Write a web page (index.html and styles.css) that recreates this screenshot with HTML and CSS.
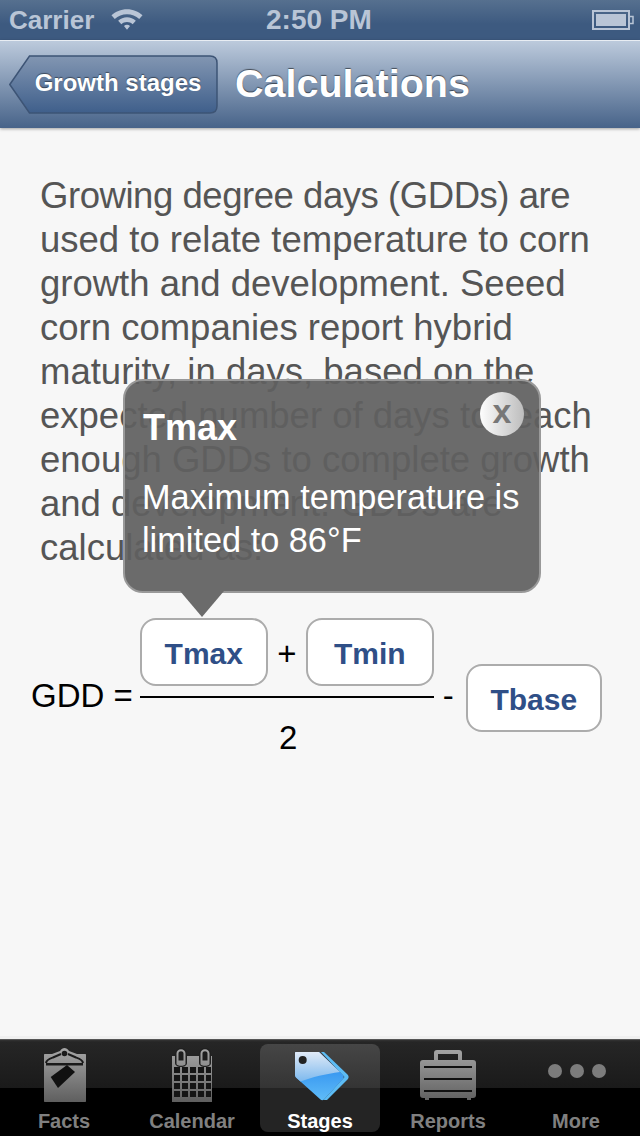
FILE: index.html
```html
<!DOCTYPE html>
<html lang="en">
<head>
<meta charset="utf-8">
<title>Calculations</title>
<link rel="stylesheet" href="styles.css">
</head>
<body>
<div class="app">
  <header class="status">
    <div class="status-left">
      <span>Carrier</span>
      <svg class="wifi" width="32" height="23" viewBox="1 5 34 24"><path d="M18 6C11.500 6 5.800 8.500 1.500 12.500L5 16.500C8.500 13.300 13 11.400 18 11.400S27.500 13.300 31 16.500L34.500 12.500C30.200 8.500 24.500 6 18 6Z M18 14.500C14.500 14.500 11.200 15.800 8.600 18.200L12 22C13.600 20.500 15.700 19.700 18 19.700S22.400 20.500 24 22L27.400 18.200C24.800 15.800 21.500 14.500 18 14.500Z M18 22.500C16.800 22.500 15.700 23 14.800 23.800L18 28L21.200 23.800C20.300 23 19.200 22.500 18 22.500Z"/></svg>
    </div>
    <div class="status-time">2:50 PM</div>
    <svg class="battery" width="42" height="20" viewBox="0 0 42 20"><rect x="1" y="1" width="36" height="18" fill="none" stroke="#b9c5d6" stroke-width="2"/><rect x="4" y="4" width="30" height="12" fill="#b9c5d6"/><path d="M38 6.500h3v7h-3" fill="none" stroke="#b9c5d6" stroke-width="1.500"/></svg>
  </header>
  <nav class="navbar">
    <div class="back">
      <svg class="back-shape" width="210" height="60" viewBox="0 0 210 60">
        <defs><linearGradient id="backg" x1="0" y1="0" x2="0" y2="1"><stop offset="0" stop-color="#8296b2"/><stop offset="1" stop-color="#3f5f8b"/></linearGradient></defs>
        <path d="M0.800 29.500L20.500 1H201C205.500 1 208 3.500 208 8V51C208 55.500 205.500 58 201 58H20.500Z" fill="url(#backg)" stroke="#3d5475" stroke-width="1.500"/>
      </svg>
      <span class="back-label">Growth stages</span>
    </div>
    <h1 class="title">Calculations</h1>
  </nav>
  <main class="content">
    <p class="intro"><span class="intro-first">Growing degree days (GDDs) are</span> used to relate temperature to corn growth and development. Seeed corn companies report hybrid maturity, in days, based on the expected number of days to reach enough GDDs to complete growth and development. GDDs are calculated as:</p>
    <div class="formula">
      <span class="sym gdd">GDD =</span>
      <div class="fraction">
        <div class="numerator">
          <span class="term">Tmax</span>
          <span class="sym">+</span>
          <span class="term">Tmin</span>
        </div>
        <div class="rule"></div>
        <div class="sym denominator">2</div>
      </div>
      <span class="sym minus">-</span>
      <span class="term tbase">Tbase</span>
    </div>
    <aside class="popup">
      <div class="popup-title">Tmax</div>
      <div class="popup-text">Maximum temperature is limited to 86°F</div>
      <div class="close">x</div>
      <div class="popup-arrow"></div>
    </aside>
  </main>
  <footer class="tabbar">
    <div class="tab">
      <svg class="icon" width="60" height="60" viewBox="0 0 60 60"><defs><linearGradient id="ig" gradientUnits="userSpaceOnUse" x1="0" y1="0" x2="0" y2="56"><stop offset="0" stop-color="#a6a6a6"/><stop offset="1" stop-color="#5c5c5c"/></linearGradient></defs>
        <path fill="url(#ig)" d="M11 6H18L26 3C27 1 29 0 30.500 0S34 1 35 3L43 6H51C51.700 6 52 6.300 52 7V53C52 53.700 51.700 54 51 54H11C10.300 54 10 53.700 10 53V7C10 6.300 10.300 6 11 6Z"/>
        <path fill="none" stroke="#1a1a1a" stroke-width="2" d="M12 15C12.500 11.500 16 10.500 19 9.500L27 6 M49 15C48.500 11.500 45 10.500 42 9.500L34 6"/>
        <rect x="12" y="15" width="37" height="2.500" fill="#1a1a1a"/>
        <circle cx="30.500" cy="5.500" r="2.800" fill="#1a1a1a"/>
        <path fill="#111" d="M16.700 29L33 17L41 24L24 40Z"/>
      </svg>
      <span class="tab-label">Facts</span>
    </div>
    <div class="tab">
      <svg class="icon" width="60" height="60" viewBox="0 0 60 60">
        <rect x="10" y="8" width="40" height="46" fill="url(#ig)"/>
        <path d="M13 5.500C13 2.500 15.500 0 19 0S25 2.500 25 5.500V15C25 17.500 22 19 19 19S13 17.500 13 15Z M37 5.500C37 2.500 39.500 0 43 0S49 2.500 49 5.500V15C49 17.500 46 19 43 19S37 17.500 37 15Z" fill="#202020"/>
        <path d="M14.500 5.500C14.500 3 16.500 1.200 19 1.200S23.500 3 23.500 5.500V16C23.500 17 21 17.800 19 17.800S14.500 17 14.500 16Z M38.500 5.500C38.500 3 40.500 1.200 43 1.200S47.500 3 47.500 5.500V16C47.500 17 45 17.800 43 17.800S38.500 17 38.500 16Z" fill="url(#ig)"/>
        <path d="M16.500 5.500C16.500 4 17.700 3.200 19 3.200S21.500 4 21.500 5.500V12.500H16.500Z M40.500 5.500C40.500 4 41.700 3.200 43 3.200S45.500 4 45.500 5.500V12.500H40.500Z" fill="#1d1d1d"/>
        <g fill="#151515">
          <rect x="12" y="19" width="6" height="6"/><rect x="20" y="19" width="6" height="6"/><rect x="28" y="19" width="6" height="6"/><rect x="36" y="19" width="6" height="6"/><rect x="44" y="19" width="5" height="6"/>
          <rect x="12" y="27" width="6" height="6"/><rect x="20" y="27" width="6" height="6"/><rect x="28" y="27" width="6" height="6"/><rect x="36" y="27" width="6" height="6"/><rect x="44" y="27" width="5" height="6"/>
          <rect x="12" y="35" width="6" height="6"/><rect x="20" y="35" width="6" height="6"/><rect x="28" y="35" width="6" height="6"/><rect x="36" y="35" width="6" height="6"/><rect x="44" y="35" width="5" height="6"/>
          <rect x="12" y="43" width="6" height="6"/><rect x="20" y="43" width="6" height="6"/><rect x="28" y="43" width="6" height="6"/><rect x="36" y="43" width="6" height="6"/><rect x="44" y="43" width="5" height="6"/>
        </g>
      </svg>
      <span class="tab-label">Calendar</span>
    </div>
    <div class="tab active">
      <svg class="icon" width="60" height="60" viewBox="0 0 60 60"><defs><linearGradient id="glossg" x1="0" y1="0" x2="0" y2="1"><stop offset="0" stop-color="#e0eaf7"/><stop offset="1" stop-color="#7db9ee"/></linearGradient><linearGradient id="tagg" x1="0" y1="0" x2="0" y2="1"><stop offset="0" stop-color="#1f80ec"/><stop offset="1" stop-color="#5fbcf8"/></linearGradient></defs>
        <path d="M31 4H34L57.500 26.500C59 28 59 30 57.500 31.500L37 52H33.500L54.500 29Z" fill="#5cbcf5"/>
        <path d="M6 4H29L53 27C54 28 54 30 53 31L34 51.500C33 52.500 31.500 52.500 30.500 51.500L6 29.500C5.300 28.800 5 28 5 27V5C5 4.400 5.400 4 6 4Z" fill="url(#tagg)"/>
        <path d="M6 4H29L50 24C36 26 22 29 10.500 33.500L6 29.500C5.300 28.800 5 28 5 27V5C5 4.400 5.400 4 6 4Z" fill="url(#glossg)"/>
        <circle cx="12.700" cy="12" r="4" fill="#222"/>
      </svg>
      <span class="tab-label">Stages</span>
    </div>
    <div class="tab">
      <svg class="icon" width="60" height="60" viewBox="0 0 60 60">
        <path d="M16 12V5C16 3 17 2 19 2H41C43 2 44 3 44 5V12H40V6H20V12Z" fill="url(#ig)"/>
        <path fill="url(#ig)" d="M5 12H55C57 12 58 13 58 15V47C58 49 57 50 55 50H53V52H49V50H11V52H7V50H5C3 50 2 49 2 47V15C2 13 3 12 5 12Z"/>
        <rect x="6" y="18" width="48" height="2" fill="#111"/><rect x="6" y="30" width="48" height="2" fill="#111"/><rect x="6" y="42" width="48" height="2" fill="#111"/>
      </svg>
      <span class="tab-label">Reports</span>
    </div>
    <div class="tab">
      <svg class="icon" width="60" height="60" viewBox="0 0 60 60">
        <circle cx="9" cy="23" r="7" fill="#7c7c7c"/><circle cx="31" cy="23" r="7" fill="#7c7c7c"/><circle cx="53" cy="23" r="7" fill="#7c7c7c"/>
      </svg>
      <span class="tab-label">More</span>
    </div>
  </footer>
</div>
</body>
</html>
```
FILE: styles.css
```css
* { box-sizing: border-box; }
html, body { margin: 0; padding: 0; }
body { width: 640px; height: 1136px; overflow: hidden; font-family: "Liberation Sans", Arial, sans-serif; background: #f7f7f7; }
.app { width: 640px; height: 1136px; display: flex; flex-direction: column; }

.status { height: 40px; flex: none; position: relative; display: flex; align-items: center; justify-content: space-between; padding: 0 6px 0 9px; background: linear-gradient(#56708f, #3d5a80 60%); color: #b9c5d6; font-size: 26px; font-weight: 700; }
.status-left { display: flex; align-items: center; gap: 17px; }
.wifi { fill: #b9c5d6; margin-top: -1px; }
.status-time { position: absolute; left: 266px; top: 4px; font-size: 28px; }

.navbar { height: 88px; flex: none; display: flex; align-items: center; gap: 16px; padding: 0 0 0 9px; border-top: 1px solid #e8edf3; background: linear-gradient(#bccadc, #476389); box-shadow: 0 1px 3px rgba(0,0,0,.35); position: relative; z-index: 2; }
.back { width: 210px; height: 60px; position: relative; display: flex; align-items: center; justify-content: center; padding: 0 0 4px 8px; }
.back-shape { position: absolute; left: 0; top: 0; }
.back-label { position: relative; color: #fff; font-size: 24px; font-weight: 700; text-shadow: 0 -1px 1px rgba(0,0,0,.45); }
.title { margin: 0; padding-bottom: 3px; color: #fff; font-size: 39.500px; font-weight: 700; text-shadow: 0 -1px 1px rgba(0,0,0,.55); }

.content { flex: 1; position: relative; background: #f7f7f7; padding: 46px 40px 0 40px; }
.intro { margin: 0; font-size: 36.500px; line-height: 44px; color: #555; width: 558px; }
.intro-first { letter-spacing: -.45px; }
.formula { display: flex; align-items: flex-start; margin: 48px 0 0 -9px; }
.sym { font-size: 33px; line-height: 36px; color: #000; }
.gdd { margin: 60px 7px 0 0; flex: none; white-space: nowrap; }
.fraction { flex: none; width: 294px; display: flex; flex-direction: column; }
.numerator { display: flex; align-items: center; justify-content: space-between; }
.numerator .sym { padding-top: 4px; }
.term { display: flex; flex: none; align-items: center; justify-content: center; width: 128px; height: 68px; padding-top: 3px; border: 2px solid #acacac; border-radius: 16px; background: #fff; color: #2f4f87; font-size: 30px; font-weight: 700; }
.rule { height: 2px; background: #000; margin-top: 10px; }
.denominator { text-align: center; margin-top: 22px; padding-left: 3px; }
.minus { flex: none; margin: 60px 12px 0 9px; }
.tbase { width: 136px; margin-top: 46px; }

.popup { position: absolute; left: 123px; top: 251px; width: 418px; height: 214px; background: rgba(96,96,96,.93); border: 2px solid #999; border-radius: 20px; color: #fff; padding: 27px 18px 0 18px; }
.popup-title { font-size: 36px; font-weight: 700; line-height: 40px; }
.popup-text { font-size: 34.300px; line-height: 43px; margin-top: 28px; margin-left: -1px; }
.close { position: absolute; right: 15px; top: 11px; width: 44px; height: 44px; border-radius: 50%; background: linear-gradient(90deg, #fdfdfd, #bdbdbd); color: #777; font-size: 34px; font-weight: 700; display: flex; align-items: center; justify-content: center; padding-bottom: 6px; }
.popup-arrow { position: absolute; left: 55px; bottom: -26px; width: 0; height: 0; border-left: 22px solid transparent; border-right: 22px solid transparent; border-top: 26px solid #6b6b6b; }

.tabbar { height: 100px; flex: none; display: flex; gap: 8px; padding: 5px 4px 4px; border-top: 3px solid #f0f0f0; background: linear-gradient(#3a3a3a 0, #262626 3px, #1a1a1a 49px, #000 49px); box-shadow: inset 0 1px 0 #555; }
.tab { flex: 1; display: flex; flex-direction: column; align-items: center; justify-content: flex-end; border-radius: 8px; color: #808080; font-size: 20px; font-weight: 700; }
.tab-label { line-height: 24px; margin-bottom: -1px; }
.icon { flex: none; margin-bottom: 1px; }
.active { background: linear-gradient(#464646, #343434 50%, #242424 50%); color: #fff; }
```
